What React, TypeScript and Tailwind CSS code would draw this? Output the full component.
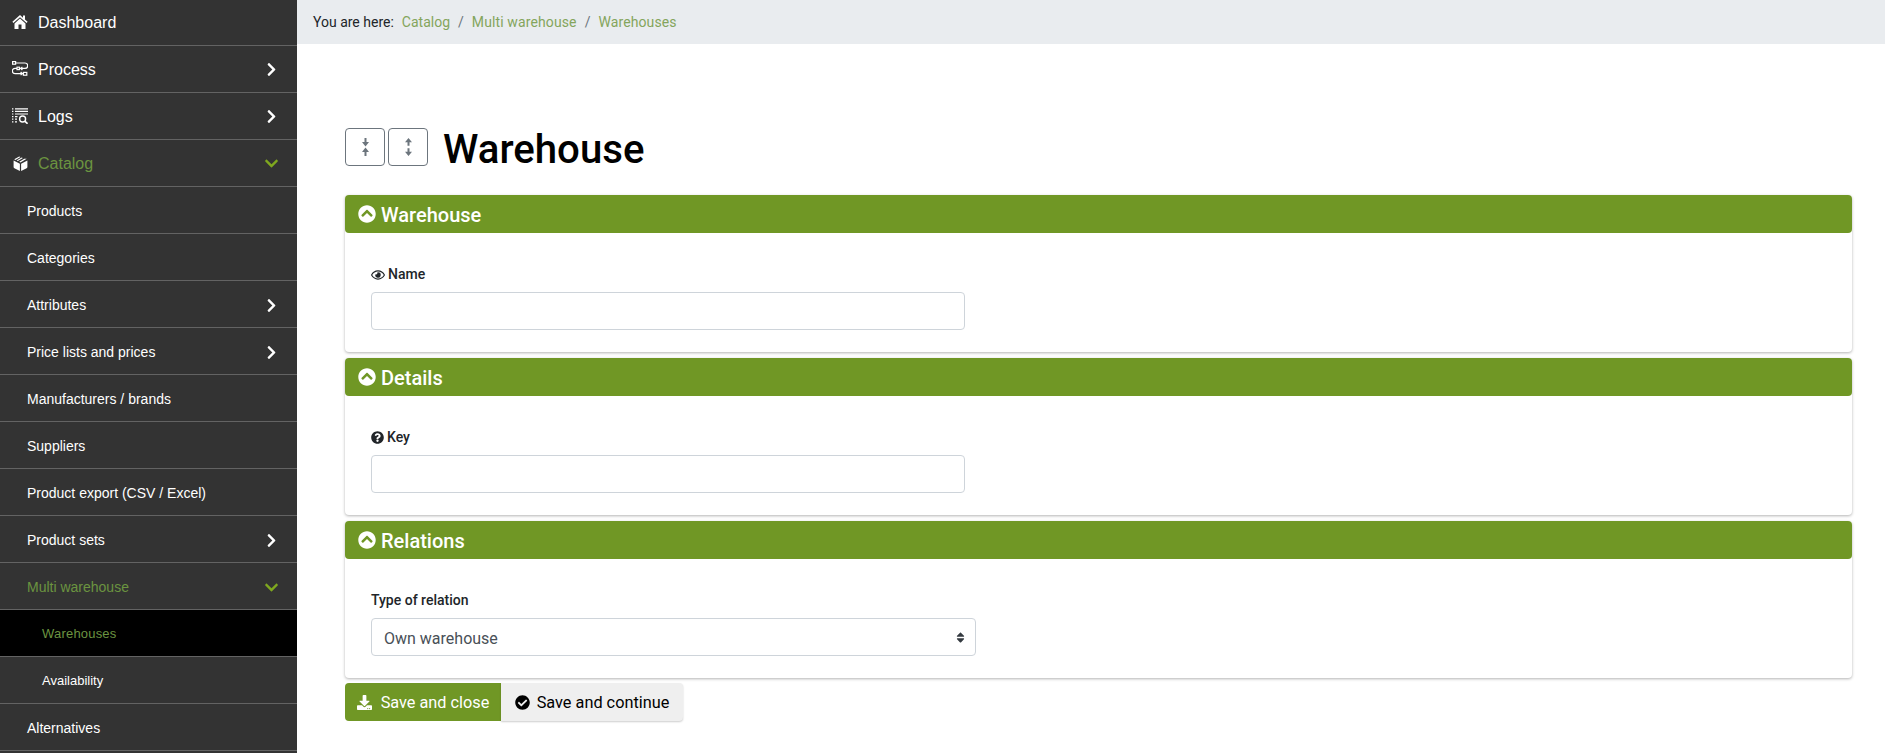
import React from "react";
import {
	FaChevronRight,
	FaChevronDown,
	FaChevronCircleUp,
	FaQuestionCircle,
	FaDownload,
	FaCheckCircle,
	FaSort,
	FaRegEye,
} from "react-icons/fa";

const HomeIcon = () => (
	<svg viewBox="0 0 16 16" className="w-4 h-4" fill="currentColor">
		<path d="M8 1L.4 7.8l1 1.2L8 3.2 14.6 9l1-1.2L13 5.5V1.5h-2v2.2z" />
		<path d="M8 4.6L2.5 9.5V15h4v-4.5h3V15h4V9.5z" />
	</svg>
);

const ProcessIcon = () => (
	<svg viewBox="0 0 16 15" className="w-4 h-[15px]" fill="none" stroke="currentColor" strokeWidth="1.2">
		<rect x="0.6" y="0.6" width="3" height="2.6" />
		<path d="M3.6 2H13a2.6 2.6 0 0 1 0 5.4H3a2.6 2.6 0 0 0 0 5.2h8" />
		<rect x="11.4" y="11.4" width="3.4" height="2.8" />
		<rect x="5" y="6.2" width="2.4" height="2.4" fill="#333333" />
		<path d="M10.4 5.8L8.8 7.4l1.6 1.6" />
		<path d="M8.6 11l1.6 1.6-1.6 1.6" />
	</svg>
);

const LogsIcon = () => (
	<svg viewBox="0 0 16 16" className="w-4 h-4" fill="none" stroke="currentColor" strokeWidth="1.2">
		<path d="M0 .8h1.4M3 .8h13M0 3.4h1.4M3 3.4h13M0 6h1.4M3 6h13M0 8.6h1.4M3 8.6h2.5M0 11.2h1.4M3 11.2h2M0 13.8h1.4M3 13.8h2" />
		<circle cx="10.6" cy="11" r="3" strokeWidth="1.4" />
		<path d="M12.8 13.2l2.8 2.6" strokeWidth="1.6" />
	</svg>
);

const CubeIcon = () => (
	<svg viewBox="0 0 15 16" className="w-[15px] h-4 ml-px" fill="currentColor">
		<path d="M.6 5.6l6.3 3.1V16L1.4 13.2a1.4 1.4 0 0 1-.8-1.3z" />
		<path d="M14.4 5.6L8.1 8.7V16l5.5-2.8a1.4 1.4 0 0 0 .8-1.3z" />
		<path d="M1.2 4.2L6.2 1.4l1.3.6-5 2.9zM3.6 5.4l5-2.9 1.3.6-5 3zM6.2 6.8l5-3 2.5 0-6.2 3.7z" />
	</svg>
);

const CollapseIcon = () => (
	<svg viewBox="0 0 7 18" className="w-[7px] h-[18px]" fill="#6c757d">
		<path d="M2.5 0h2v4H7L3.5 8.4 0 4h2.5zM3.5 9.6L7 14H4.5v4h-2v-4H0z" />
	</svg>
);

const ExpandIcon = () => (
	<svg viewBox="0 0 7 18" className="w-[7px] h-[18px]" fill="#6c757d">
		<path d="M3.5 0L7 4.2H4.5v3.6h-2V4.2H0zM2.5 10.2h2v3.6H7L3.5 18 0 13.8h2.5z" />
	</svg>
);

const MenuRow = ({
	label,
	icon,
	level = 1,
	arrow,
	active,
	current,
	first,
}: {
	label: string;
	icon?: React.ReactNode;
	level?: 0 | 1 | 2;
	arrow?: "right" | "down";
	active?: boolean;
	current?: boolean;
	first?: boolean;
}) => (
	<div
		className={`shrink-0 flex items-center pr-[18px] ${
			first ? "h-[45px]" : "h-[47px] border-t border-[#636363]"
		} ${current ? "bg-black" : ""} ${active ? "text-[#6b9440]" : "text-white"} ${
			level === 0
				? `text-base pl-3 ${first ? "" : "pt-px"}`
				: level === 1
					? "text-[14px] pl-[27px] pt-[3px]"
					: "text-[13px] pl-[42px] pt-px"
		}`}
	>
		{icon && <span className="w-[26px] flex text-white -mt-0.5">{icon}</span>}
		<span className={current ? "tracking-[0.2px]" : ""}>{label}</span>
		{arrow === "right" && <FaChevronRight className="ml-auto text-white" size={15} />}
		{arrow === "down" && <FaChevronDown className="ml-auto text-[#7fa81f]" size={15} />}
	</div>
);

const Card = ({ title, children }: { title: string; children: React.ReactNode }) => (
	<section className="bg-white rounded-[4px] shadow-[0_1px_3px_rgba(0,0,0,0.3)]">
		<h2 className="h-[38px] bg-[#709725] rounded-[4px] flex items-center gap-[5px] px-[13px] text-white text-[20px] font-medium">
			<FaChevronCircleUp size={18} />
			<span className="pt-px">{title}</span>
		</h2>
		<div className="pt-[31px] pb-[22px] px-[26px]">{children}</div>
	</section>
);

const textInput =
	"block w-[594px] h-[38px] mt-[7px] bg-white border border-[#ced4da] rounded-[4px]";

export default function App() {
	return (
		<div className="h-screen flex overflow-hidden bg-white font-['Roboto',sans-serif] text-[#212529]">
			<aside className="w-[297px] shrink-0 bg-[#333333] flex flex-col overflow-hidden font-['Liberation_Sans',sans-serif]">
				<MenuRow first level={0} label="Dashboard" icon={<HomeIcon />} />
				<MenuRow level={0} label="Process" icon={<ProcessIcon />} arrow="right" />
				<MenuRow level={0} label="Logs" icon={<LogsIcon />} arrow="right" />
				<MenuRow level={0} label="Catalog" icon={<CubeIcon />} arrow="down" active />
				<MenuRow label="Products" />
				<MenuRow label="Categories" />
				<MenuRow label="Attributes" arrow="right" />
				<MenuRow label="Price lists and prices" arrow="right" />
				<MenuRow label="Manufacturers / brands" />
				<MenuRow label="Suppliers" />
				<MenuRow label="Product export (CSV / Excel)" />
				<MenuRow label="Product sets" arrow="right" />
				<MenuRow label="Multi warehouse" arrow="down" active />
				<MenuRow level={2} label="Warehouses" active current />
				<MenuRow level={2} label="Availability" />
				<MenuRow label="Alternatives" />
				<MenuRow label="" />
			</aside>

			<main className="flex-1 min-w-0">
				<nav className="h-11 bg-[#e9ecef] flex items-center pl-4 text-[14px]">
					<span className="mr-2">You are here:</span>
					<span className="text-[#84a55c]">Catalog</span>
					<span className="mx-2 text-[#6c757d]">/</span>
					<span className="text-[#84a55c] tracking-[0.12px]">Multi warehouse</span>
					<span className="mx-2 text-[#6c757d]">/</span>
					<span className="text-[#84a55c] tracking-[0.1px]">Warehouses</span>
				</nav>

				<div className="pl-[48px] pr-[33px]">
					<div className="flex items-center pt-[81px] pb-[27px] h-[151px]">
						<button className="w-10 h-[38px] flex items-center justify-center border border-[#6c757d] rounded-[4px]">
							<CollapseIcon />
						</button>
						<button className="w-10 h-[38px] ml-[3px] flex items-center justify-center border border-[#6c757d] rounded-[4px]">
							<ExpandIcon />
						</button>
						<h1 className="ml-[15px] mt-[7px] text-[40.2px] leading-[48px] font-medium text-black">Warehouse</h1>
					</div>

					<div className="flex flex-col gap-[6px]">
						<Card title="Warehouse">
							<label className="flex items-center gap-[3px] text-[14px] leading-[21px] font-medium">
								<FaRegEye size={14} />
								Name
							</label>
							<input className={textInput} />
						</Card>
						<Card title="Details">
							<label className="flex items-center gap-[3px] text-[14px] leading-[21px] font-medium">
								<FaQuestionCircle size={13} />
								Key
							</label>
							<input className={textInput} />
						</Card>
						<Card title="Relations">
							<label className="block text-[14px] leading-[21px] font-medium">Type of relation</label>
							<div className="w-[605px] h-[38px] mt-[7px] flex items-center justify-between pl-3 pr-2 border border-[#ced4da] rounded-[4px] text-base text-[#495057]">
								<span className="pt-[3px]">Own warehouse</span>
								<FaSort size={13} className="text-[#343a40]" />
							</div>
						</Card>
					</div>

					<div className="flex mt-[5px]">
						<button className="h-[38px] w-[156px] bg-[#709725] text-white rounded-l-[4px] flex items-center justify-center gap-[9px] text-[16.3px]">
							<FaDownload size={15} />
							<span className="pt-[3px]">Save and close</span>
						</button>
						<button className="h-[38px] w-[182px] bg-[#efefef] text-black rounded-r-[4px] flex items-center justify-center gap-[7px] text-[16.3px] shadow-[0_1px_2px_rgba(0,0,0,0.2)]">
							<FaCheckCircle size={15} />
							<span className="pt-[3px]">Save and continue</span>
						</button>
					</div>
				</div>
			</main>
		</div>
	);
}
